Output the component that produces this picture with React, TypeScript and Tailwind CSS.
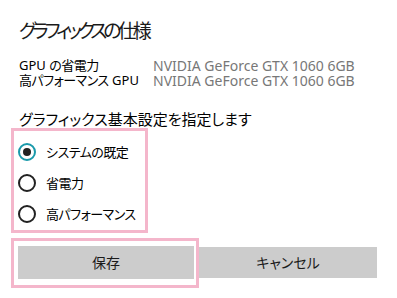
export default function App() {
  const options = [
    { label: 'システムの既定', checked: true },
    { label: '省電力', checked: false },
    { label: '高パフォーマンス', checked: false },
  ];

  return (
    <div
      className="w-[397px] h-[298px] bg-white text-black overflow-hidden flex flex-col whitespace-nowrap [font-feature-settings:'palt']"
      style={{ fontFamily: '"Noto Sans", "Noto Sans CJK JP", sans-serif' }}
    >
      {/* Title */}
      <div className="pl-[19px] pt-[18px] text-[19px] leading-[26px] tracking-[-4px] text-[#1a1a1a]">グラフィックスの仕様</div>

      {/* GPU info */}
      <div className="pl-[19px] mt-[14px] grid grid-cols-[134px_1fr] text-[14px] leading-[15px]">
        <div className="text-[13px]">
          GPU <span className="tracking-[-0.5px]">の省電力</span>
        </div>
        <div className="text-[#777777]">NVIDIA GeForce GTX 1060 6GB</div>
        <div className="text-[13px]">
          <span className="tracking-[-0.5px]">高パフォーマンス</span> GPU
        </div>
        <div className="text-[#777777]">NVIDIA GeForce GTX 1060 6GB</div>
      </div>

      <div className="pl-[19px] mt-[23px] text-[15px] leading-[16px]">グラフィックス基本設定を指定します</div>

      {/* Radio group */}
      <div className="ml-[11px] mt-[1px] w-[137px] h-[105px] border-[3px] border-[#f4b6cb] flex flex-col pt-[5px]">
        {options.map((o) => (
          <div key={o.label} className="flex items-center h-[33px] pl-[4px] gap-[10px]">
            <div
              className={`w-[18px] h-[18px] rounded-full border-[2px] flex items-center justify-center ${
                o.checked ? 'border-[#1a9aab]' : 'border-[#222]'
              }`}
            >
              {o.checked && <div className="w-[8px] h-[8px] rounded-full bg-[#222]" />}
            </div>
            <span className="text-[13px] leading-[16px] tracking-[-0.5px]">{o.label}</span>
          </div>
        ))}
      </div>

      {/* Buttons */}
      <div className="flex items-start mt-[5px]">
        <div className="ml-[11px] w-[188px] h-[50px] border-[3px] border-[#f4b6cb] pl-[4px] pr-[2px] pt-[5px] pb-[6px]">
          <button className="w-full h-full bg-[#cccccc] text-[14px] text-[#1a1a1a]">保存</button>
        </div>
        <button className="mt-[9px] w-[178px] h-[31px] bg-[#cccccc] text-[14px] text-[#1a1a1a]">キャンセル</button>
      </div>
    </div>
  );
}
